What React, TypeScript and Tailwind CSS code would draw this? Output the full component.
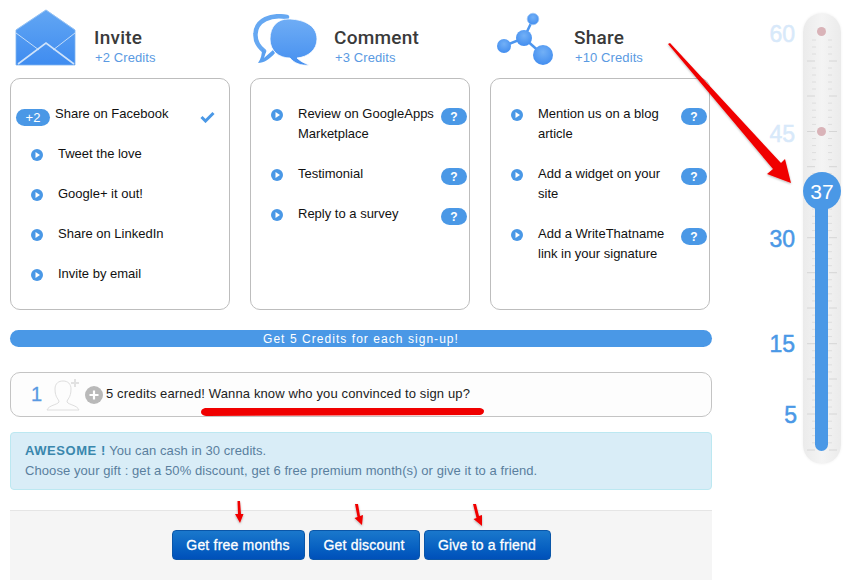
import React from "react";

const FONT = "font-['Liberation_Sans',Arial,sans-serif]";

function Envelope() {
  return (
    <svg width="62" height="58" viewBox="0 0 62 58" className="block">
      <defs>
        <linearGradient id="env" x1="0" y1="0" x2="0" y2="1">
          <stop offset="0" stopColor="#62a6f3" />
          <stop offset="1" stopColor="#3f8cf0" />
        </linearGradient>
      </defs>
      <path d="M31 1 L60 21 V56 H1 V21 Z" fill="url(#env)" stroke="#7db4f0" strokeWidth="0.8" />
      <path d="M1 24 L24 41 M60 24 L38 41" stroke="#c4ddf9" strokeWidth="1" fill="none" />
      <path d="M3 55 L31 34 L59 55" stroke="#cfe3fa" strokeWidth="1.6" fill="none" />
      <path d="M1 21 L31 1 L60 21" stroke="#9cc6f5" strokeWidth="0.6" fill="none" />
    </svg>
  );
}

function Bubbles() {
  return (
    <svg width="66" height="52" viewBox="0 0 66 52" className="block">
      <defs>
        <linearGradient id="bub" x1="0" y1="0" x2="0" y2="1">
          <stop offset="0" stopColor="#6fadf5" />
          <stop offset="1" stopColor="#4690f0" />
        </linearGradient>
      </defs>
      <path
        d="M34 3 C18 0 3 6 2.500 20 C2 28 6 33 11 37"
        fill="none"
        stroke="#66a8f2"
        strokeWidth="4.500"
        strokeLinecap="round"
      />
      <path d="M9 35 L13 38 L11 44 L20 36 L22 39 C17 45 11 49 5 49 C8 45 9 40 9 35 Z" fill="#5aa0f0" />
      <path
        d="M35 5 C48 5 64 10 64 25 C64 36 55 43 44 44 C47 47 51 49 56 51 C48 52 41 49 37 44 C26 44 17 37 17 25 C17 12 25 5 35 5 Z"
        fill="url(#bub)"
        stroke="#fff"
        strokeWidth="0.8"
      />
    </svg>
  );
}

function Molecule() {
  return (
    <svg width="58" height="54" viewBox="0 0 58 54" className="block">
      <defs>
        <radialGradient id="mol" cx="0.5" cy="0.35" r="0.7">
          <stop offset="0" stopColor="#72b0f6" />
          <stop offset="1" stopColor="#3f8bef" />
        </radialGradient>
      </defs>
      <path d="M8 34 L28 26 L37 7 M28 26 L47 43" stroke="#4d96ee" strokeWidth="2.500" fill="none" />
      <circle cx="37" cy="7" r="5.800" fill="url(#mol)" stroke="#9cc6f5" strokeWidth="0.7" />
      <circle cx="28" cy="26" r="8" fill="url(#mol)" />
      <circle cx="8" cy="34" r="7" fill="url(#mol)" />
      <circle cx="47" cy="43" r="10" fill="url(#mol)" />
    </svg>
  );
}

function PlayDot() {
  return (
    <svg width="12" height="12" viewBox="0 0 12 12" className="block">
      <circle cx="6" cy="6" r="6" fill="#4a98e6" />
      <path d="M4.500 3 L9 6 L4.500 9 Z" fill="#fff" />
    </svg>
  );
}

function HelpPill() {
  return (
    <span className="absolute right-[2px] top-[4px] flex h-[17px] w-[26px] items-center justify-center rounded-full bg-[#4a98e6] text-[12px] font-bold leading-none text-white">
      ?
    </span>
  );
}

function Row({ text, help = true }: { text: React.ReactNode; help?: boolean }) {
  return (
    <li className="relative pl-[47px] pr-[30px]">
      <span className="absolute left-[20px] top-[5px]">
        <PlayDot />
      </span>
      <span className="block">{text}</span>
      {help && <HelpPill />}
    </li>
  );
}

function Head({
  icon,
  title,
  credits,
  iconBox,
}: {
  icon: React.ReactNode;
  title: string;
  credits: string;
  iconBox: string;
}) {
  return (
    <div className="relative flex h-[78px] pl-[84px] pt-[26px]">
      <div className={iconBox}>{icon}</div>
      <div>
        <div className="font-['Roboto',sans-serif] text-[19px] font-medium leading-[23px] tracking-[0.25px] text-[#3a3a3a]">{title}</div>
        <div className="pl-px text-[13px] leading-[18px] tracking-[0.1px] text-[#5a9ae2]">{credits}</div>
      </div>
    </div>
  );
}

function Card({ children }: { children: React.ReactNode }) {
  return (
    <ul className="flex h-[232px] flex-col gap-5 rounded-[10px] border border-[#bdbdbd] bg-white pt-[25px] text-[13px] leading-5 text-[#111]">
      {children}
    </ul>
  );
}

function Gauge() {
  const majors = [61, 96, 131.500, 166.700, 202, 237.700, 272.700, 308, 343.700, 379, 414, 450];
  const minors: number[] = [40, 47, 54];
  majors.slice(0, -1).forEach((y, i) => {
    const step = (majors[i + 1] - y) / 5;
    for (let k = 1; k < 5; k++) minors.push(y + step * k);
  });
  return (
    <div className="relative mt-[13px] h-[451px] w-[38px] rounded-full bg-gradient-to-r from-[#ebebeb] via-[#f4f4f4] to-[#ebebeb] shadow-[0_0_3px_rgba(0,0,0,0.06)]">
      <svg width="38" height="451" viewBox="0 0 38 451" className="absolute left-0 top-0">
        <g transform="translate(0 -13)">
          {minors.map((y, i) => (
            <g key={i} stroke="#dedede" strokeWidth="1">
              <path d={`M9 ${y} H13`} />
              <path d={`M25 ${y} H29`} />
            </g>
          ))}
          {majors.map((y, i) => (
            <g key={i} stroke="#d6d6d6" strokeWidth="1">
              <path d={`M4 ${y} H12`} />
              <path d={`M26 ${y} H34`} />
            </g>
          ))}
        </g>
      </svg>
      <span className="absolute left-[14px] top-[14px] h-[9px] w-[9px] rounded-full bg-[#d9b3b8]" />
      <span className="absolute left-[14px] top-[114px] h-[9px] w-[9px] rounded-full bg-[#d9b3b8]" />
      <span className="absolute bottom-[13px] left-[12px] top-[185px] w-[13px] rounded-b-full bg-[#4a98e6]" />
      <span className="absolute left-0 top-[159px] flex h-[38px] w-[38px] items-center justify-center rounded-full bg-[#4a98e6] text-[21px] leading-none text-white">
        37
      </span>
      {[
        { t: "60", top: 8, right: 46, c: "text-[#d8e9fa]" },
        { t: "45", top: 108, right: 46, c: "text-[#d8e9fa]" },
        { t: "30", top: 213, right: 46, c: "text-[#4a98e6]" },
        { t: "15", top: 318, right: 46, c: "text-[#4a98e6]" },
        { t: "5", top: 389, right: 44, c: "text-[#4a98e6]" },
      ].map((l) => (
        <span
          key={l.t}
          style={{ top: l.top, right: l.right }}
          className={`absolute text-[23px] leading-[26px] [-webkit-text-stroke:0.5px_currentColor] ${l.c}`}
        >
          {l.t}
        </span>
      ))}
    </div>
  );
}

function Arrows() {
  return (
    <svg width="862" height="585" viewBox="0 0 862 585" className="pointer-events-none absolute left-0 top-0">
      <defs>
        <filter id="sh" x="-20%" y="-20%" width="140%" height="140%">
          <feDropShadow dx="0" dy="1" stdDeviation="1" floodColor="#000" floodOpacity="0.3" />
        </filter>
      </defs>
      <g fill="#f00000" filter="url(#sh)">
        <path d="M668 44 L670 43 L781 163 L785 159 L791 183 L767 174 L773 169 Z" />
        <path d="M237.500 501 L240 501 L241 514 L243.500 514 L240 523 L235 514 L238 514 Z" />
        <path d="M355 504 L358 504 L360 516 L363 515 L362 525 L354.500 518 L357.500 517 Z" />
        <path d="M473 504 L476 504 L479 516 L482 515 L482 526 L473.500 519 L476.500 518 Z" />
      </g>
      <path d="M205 408 H480 Q484 409 484 411 Q484 414 480 415 L206 416 Q201 415 201 412 Q201 409 205 408 Z" fill="#f00000" />
    </svg>
  );
}

export default function App() {
  return (
    <div className={`relative flex h-[585px] w-[862px] overflow-hidden bg-white ${FONT}`}>
      <main className="ml-[10px] w-[702px]">
        <div className="grid grid-cols-[220px_220px_220px] gap-5">
          <section>
            <Head icon={<Envelope />} title="Invite" credits="+2 Credits" iconBox="absolute left-[5px] top-[9px]" />
            <Card>
              <li className="relative pl-[44px]">
                <span className="absolute left-[5px] top-[5px] flex h-[17px] w-[34px] items-center justify-center rounded-full bg-[#4a98e6] text-[13px] leading-none text-white">
                  +2
                </span>
                Share on Facebook
                <svg width="15" height="12" viewBox="0 0 15 12" className="absolute left-[189px] top-[7px]">
                  <path d="M1.500 6 L5.500 10 L13.500 2" fill="none" stroke="#4a98e6" strokeWidth="3" />
                </svg>
              </li>
              <Row text="Tweet the love" help={false} />
              <Row text="Google+ it out!" help={false} />
              <Row text="Share on LinkedIn" help={false} />
              <Row text="Invite by email" help={false} />
            </Card>
          </section>
          <section>
            <Head icon={<Bubbles />} title="Comment" credits="+3 Credits" iconBox="absolute left-[3px] top-[14px]" />
            <Card>
              <Row text="Review on GoogleApps Marketplace" />
              <Row text="Testimonial" />
              <Row text="Reply to a survey" />
            </Card>
          </section>
          <section>
            <Head icon={<Molecule />} title="Share" credits="+10 Credits" iconBox="absolute left-[6px] top-[12px]" />
            <Card>
              <Row text="Mention us on a blog article" />
              <Row text="Add a widget on your site" />
              <Row text="Add a WriteThatname link in your signature" />
            </Card>
          </section>
        </div>

        <div className="mt-5 flex h-[17px] items-center justify-center rounded-full bg-[#4a98e6] text-[12px] leading-none tracking-[1.05px] text-white">
          Get 5 Credits for each sign-up!
        </div>

        <div className="mt-[25px] flex h-[45px] items-center rounded-[10px] border border-[#c4c4c4] bg-[#fdfdfd] pb-[2px] text-[13px] tracking-[0.13px] text-[#222]">
          <span className="ml-[20px] w-[15px] text-[20px] leading-none text-[#5a9ae2] [-webkit-text-stroke:0.3px_currentColor]">1</span>
          <svg width="36" height="34" viewBox="0 0 36 34" className="mt-[3px] block">
            <path
              d="M1 32 C3 27 11 27 13 24 C13 21 9 20 9 11 C9 5 13 3 17 3 C22 3 25 6 25 11 C25 20 21 21 21 24 C23 27 31 27 33 32 Z"
              fill="none"
              stroke="#dedede"
              strokeWidth="1"
            />
            <path d="M29 1 V9 M25 5 H33" stroke="#e2e2e2" strokeWidth="2" />
          </svg>
          <span className="ml-[3px] mt-[2px] flex h-[18px] w-[18px] items-center justify-center rounded-full bg-[#b9b9b9]">
            <svg width="10" height="10" viewBox="0 0 10 10" className="block">
              <path d="M5 0.500 V9.500 M0.500 5 H9.500" stroke="#fff" strokeWidth="2.200" />
            </svg>
          </span>
          <span className="ml-[3px]">5 credits earned! Wanna know who you convinced to sign up?</span>
        </div>

        <div className="mt-[15px] h-[58px] rounded-[4px] border border-[#bce8f1] bg-[#d9edf7] px-[14px] pt-[8px] text-[13px] leading-[20px] tracking-[0.08px] text-[#5a7f9e]">
          <div>
            <b className="font-bold tracking-[0.55px] text-[#3a87ad]">AWESOME !</b> You can cash in 30 credits.
          </div>
          <div>Choose your gift : get a 50% discount, get 6 free premium month(s) or give it to a friend.</div>
        </div>

        <div className="mt-5 flex h-[70px] justify-center gap-1 border-t border-[#e5e5e5] bg-[#f5f5f5] pt-[19px]">
          {[
            { t: "Get free months", w: "w-[133px]" },
            { t: "Get discount", w: "w-[111px]" },
            { t: "Give to a friend", w: "w-[127px]" },
          ].map((b) => (
            <button
              key={b.t}
              className={`h-[30px] ${b.w} rounded-[4px] border border-[#0a56a8] bg-gradient-to-b from-[#1a78cc] to-[#0050ba] text-[14px] leading-none tracking-[0.2px] text-white [-webkit-text-stroke:0.3px_white]`}
            >
              {b.t}
            </button>
          ))}
        </div>
      </main>
      <aside className="ml-[91px]">
        <Gauge />
      </aside>
      <Arrows />
    </div>
  );
}
